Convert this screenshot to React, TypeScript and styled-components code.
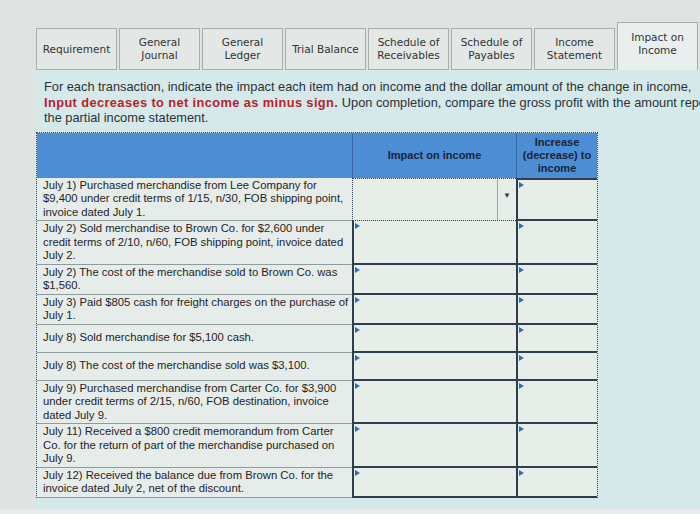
import styled, { createGlobalStyle } from "styled-components";

type Tab = {
  label: string[];
  active?: boolean;
};

const TABS: Tab[] = [
  { label: ["Requirement"] },
  { label: ["General", "Journal"] },
  { label: ["General", "Ledger"] },
  { label: ["Trial Balance"] },
  { label: ["Schedule of", "Receivables"] },
  { label: ["Schedule of", "Payables"] },
  { label: ["Income", "Statement"] },
  { label: ["Impact on", "Income"], active: true },
];

const ROWS: string[][] = [
  [
    "July 1) Purchased merchandise from Lee Company for",
    "$9,400 under credit terms of 1/15, n/30, FOB shipping point,",
    "invoice dated July 1.",
  ],
  [
    "July 2) Sold merchandise to Brown Co. for $2,600 under",
    "credit terms of 2/10, n/60, FOB shipping point, invoice dated",
    "July 2.",
  ],
  ["July 2) The cost of the merchandise sold to Brown Co. was", "$1,560."],
  ["July 3) Paid $805 cash for freight charges on the purchase of", "July 1."],
  ["July 8) Sold merchandise for $5,100 cash."],
  ["July 8) The cost of the merchandise sold was $3,100."],
  [
    "July 9) Purchased merchandise from Carter Co. for $3,900",
    "under credit terms of 2/15, n/60, FOB destination, invoice",
    "dated July 9.",
  ],
  [
    "July 11) Received a $800 credit memorandum from Carter",
    "Co. for the return of part of the merchandise purchased on",
    "July 9.",
  ],
  [
    "July 12) Received the balance due from Brown Co. for the",
    "invoice dated July 2, net of the discount.",
  ],
];

const GlobalStyle = createGlobalStyle`
  html, body {
    margin: 0;
    padding: 0;
    background: #dfe3e1;
    font-family: "Liberation Sans", Arial, sans-serif;
    overflow: hidden;
  }
`;

const Page = styled("div")`
  width: 700px;
  height: 514px;
  padding: 22px 0 0 36px;
  box-sizing: border-box;
  display: flex;
  flex-direction: column;
  overflow: hidden;
`;

const TabBar = styled("div")`
  display: flex;
  align-items: flex-end;
  gap: 2px;
  height: 48px;
`;

const TabItem = styled("div")<{ $active?: boolean }>`
  flex: 0 0 81px;
  height: ${(p) => (p.$active ? "48px" : "42px")};
  box-sizing: border-box;
  display: flex;
  flex-direction: column;
  align-items: center;
  justify-content: center;
  border: 1px solid #a7afad;
  border-bottom: ${(p) => (p.$active ? "none" : "1px solid #a7afad")};
  background: ${(p) => (p.$active ? "#e9efef" : "#e3e7e5")};
  color: #2f3436;
  font-family: "DejaVu Sans", Verdana, sans-serif;
  font-size: 10.5px;
  line-height: 13px;
  text-align: center;
  padding-bottom: ${(p) => (p.$active ? "6px" : "0")};
`;

const Panel = styled("div")`
  flex: 0 0 430px;
  background: #d5e9eb;
  padding: 9px 0 0 8px;
  overflow: hidden;
`;

const Instructions = styled("p")`
  margin: 0;
  white-space: nowrap;
  font-size: 12.8px;
  line-height: 15.5px;
  color: #2b3236;
`;

const Warning = styled("strong")`
  color: #b5232c;
  letter-spacing: 0.4px;
`;

const Frame = styled("div")`
  margin: 6px 0 0 -8px;
  width: 562px;
  border: 1px dotted #3d4850;
  border-bottom: none;
  box-sizing: border-box;
`;

const Row = styled("div")`
  display: grid;
  grid-template-columns: 315px 164px 81px;
`;

const HeadCell = styled("div")`
  height: 45px;
  display: flex;
  flex-direction: column;
  align-items: center;
  justify-content: center;
  background: #4d8dd3;
  border-left: 1px solid #3667a3;
  color: #17253a;
  font-size: 11px;
  font-weight: bold;
  line-height: 13px;
  text-align: center;

  &:first-child {
    border-left: none;
  }
`;

const TextCell = styled("div")`
  min-height: 28px;
  box-sizing: border-box;
  padding: 1px 2px 1px 6px;
  display: flex;
  flex-direction: column;
  justify-content: center;
  background: #e6ece9;
  border-bottom: 1px solid #8f9c9c;
  color: #1f2427;
  font-size: 11.3px;
  line-height: 13.5px;
  white-space: nowrap;
  overflow: hidden;
`;

const InputCell = styled("div")<{ $first?: boolean }>`
  position: relative;
  background: #e7eeea;
  border-left: 2px solid #2d3e4c;
  border-bottom: 2px solid #2d3e4c;
  border-top: ${(p) => (p.$first ? "2px solid #2d3e4c" : "none")};
  box-sizing: border-box;

  &::before {
    content: "";
    position: absolute;
    left: 1px;
    top: 2px;
    border-left: 5px solid #2f6db8;
    border-top: 3px solid transparent;
    border-bottom: 3px solid transparent;
  }
`;

const SelectCell = styled("div")`
  display: flex;
  background: #e7eeea;
  border: 1px dotted #2d3e4c;
  border-right: none;
  box-sizing: border-box;
`;

const SelectValue = styled("div")`
  flex: 1;
`;

const SelectArrow = styled("div")`
  flex: 0 0 18px;
  border-left: 1px solid #9aa6a6;
  display: flex;
  align-items: center;
  justify-content: center;
  padding-bottom: 8px;
  color: #2d3e4c;
  font-size: 8px;
`;

const Footer = styled("div")`
  flex: 1;
  margin-left: -36px;
  background: #e9ebea;
`;

function App() {
  return (
    <>
      <GlobalStyle />
      <Page>
        <TabBar>
          {TABS.map((tab) => (
            <TabItem key={tab.label.join(" ")} $active={tab.active}>
              {tab.label.map((line) => (
                <span key={line}>{line}</span>
              ))}
            </TabItem>
          ))}
        </TabBar>
        <Panel>
          <Instructions>
            For each transaction, indicate the impact each item had on income
            and the dollar amount of the change in income,
            <br />
            <Warning>Input decreases to net income as minus sign.</Warning> Upon
            completion, compare the gross profit with the amount reported on
            <br />
            the partial income statement.
          </Instructions>
          <Frame>
            <Row>
              <HeadCell />
              <HeadCell>Impact on income</HeadCell>
              <HeadCell>
                <span>Increase</span>
                <span>(decrease) to</span>
                <span>income</span>
              </HeadCell>
            </Row>
            {ROWS.map((lines, i) => (
              <Row key={lines[0]}>
                <TextCell>
                  {lines.map((line) => (
                    <span key={line}>{line}</span>
                  ))}
                </TextCell>
                {i === 0 ? (
                  <SelectCell>
                    <SelectValue />
                    <SelectArrow>▼</SelectArrow>
                  </SelectCell>
                ) : (
                  <InputCell />
                )}
                <InputCell $first={i === 0} />
              </Row>
            ))}
          </Frame>
        </Panel>
        <Footer />
      </Page>
    </>
  );
}

export default App;
